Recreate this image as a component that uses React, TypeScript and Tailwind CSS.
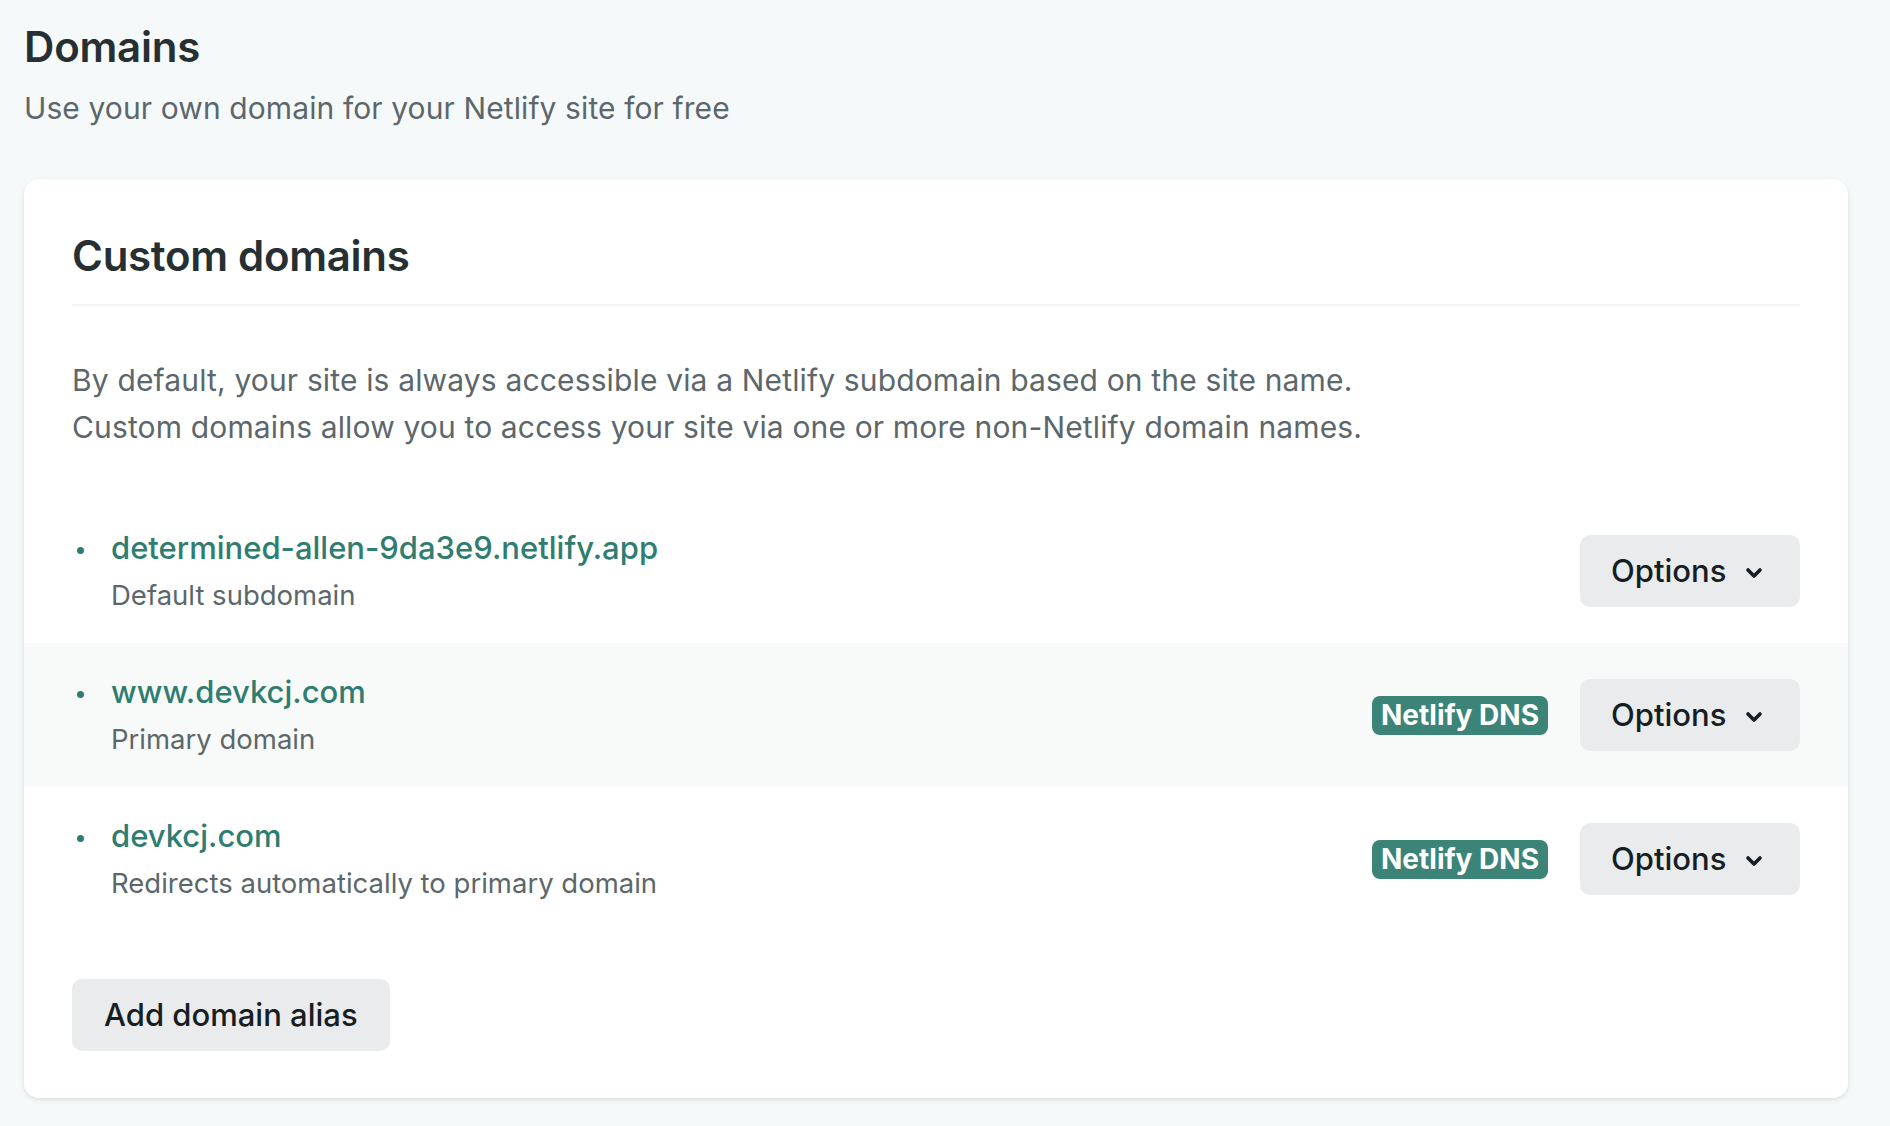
import React from "react";

type Domain = {
  name: string;
  note: string;
  dns: boolean;
  highlight?: boolean;
};

const domains: Domain[] = [
  { name: "determined-allen-9da3e9.netlify.app", note: "Default subdomain", dns: false },
  { name: "www.devkcj.com", note: "Primary domain", dns: true, highlight: true },
  { name: "devkcj.com", note: "Redirects automatically to primary domain", dns: true },
];

function Chevron() {
  return (
    <svg width="18" height="12" viewBox="0 0 18 12" fill="none" aria-hidden>
      <path
        d="M3 3L9 9L15 3"
        stroke="currentColor"
        strokeWidth="3.6"
        strokeLinecap="round"
        strokeLinejoin="round"
      />
    </svg>
  );
}

function OptionsButton() {
  return (
    <button className="flex h-[72px] w-[220px] items-center rounded-[10px] bg-[#e9ebed] pl-[31px] text-[31px] font-medium text-[#161e22]">
      <span>Options</span>
      <span className="ml-[19px] mt-[4px] flex">
        <Chevron />
      </span>
    </button>
  );
}

export default function App() {
  return (
    <div className="min-h-screen bg-[#f6f9fa] pl-[24px] pr-[42px] pt-[23px] pb-[27px] font-['Inter',sans-serif]">
      <h1 className="text-[42px] font-semibold leading-[48px] tracking-[-0.2px] text-[#263033]">
        Domains
      </h1>
      <p className="mt-[17px] text-[30px] leading-[40px] tracking-[0.1px] text-[#5c676b]">
        Use your own domain for your Netlify site for free
      </p>

      <section className="mt-[51px] rounded-[15px] bg-white px-[48px] pt-[53px] pb-[47px] shadow-[0_2px_5px_rgba(14,30,37,0.12)]">
        <div className="border-b-2 border-[#f3f5f5] pb-[24px]">
          <h2 className="text-[42px] font-semibold leading-[48px] tracking-[-0.3px] text-[#263033]">
            Custom domains
          </h2>
        </div>

        <p className="mt-[51px] text-[30px] leading-[47px] tracking-[0.15px] text-[#5c676b]">
          By default, your site is always accessible via a Netlify subdomain based on the site name.
          <br />
          Custom domains allow you to access your site via one or more non-Netlify domain names.
        </p>

        <ul className="-mx-[48px] mt-[48px]">
          {domains.map((d) => (
            <li
              key={d.name}
              className={`flex h-[144px] items-center px-[48px] ${d.highlight ? "bg-[#f8fafa]" : ""}`}
            >
              <div className="flex flex-1 items-start">
                <span className="mt-[19px] ml-[5px] mr-[27px] h-[7px] w-[7px] rounded-full bg-[#2f7d71]" />
                <div className="flex flex-col">
                  <a className="text-[31px] font-medium leading-[40px] text-[#2f7d71]">{d.name}</a>
                  <span className="mt-[7px] text-[27.5px] leading-[40px] text-[#5c676b]">{d.note}</span>
                </div>
              </div>
              {d.dns && (
                <span className="mr-[32px] flex h-[39px] items-center rounded-[8px] bg-[#3d8478] px-[9px] text-[28px] font-bold text-white">
                  Netlify DNS
                </span>
              )}
              <OptionsButton />
            </li>
          ))}
        </ul>

        <button className="mt-[48px] h-[72px] rounded-[10px] bg-[#e9ebed] px-[32px] text-[31px] font-medium text-[#161e22]">
          Add domain alias
        </button>
      </section>
    </div>
  );
}
